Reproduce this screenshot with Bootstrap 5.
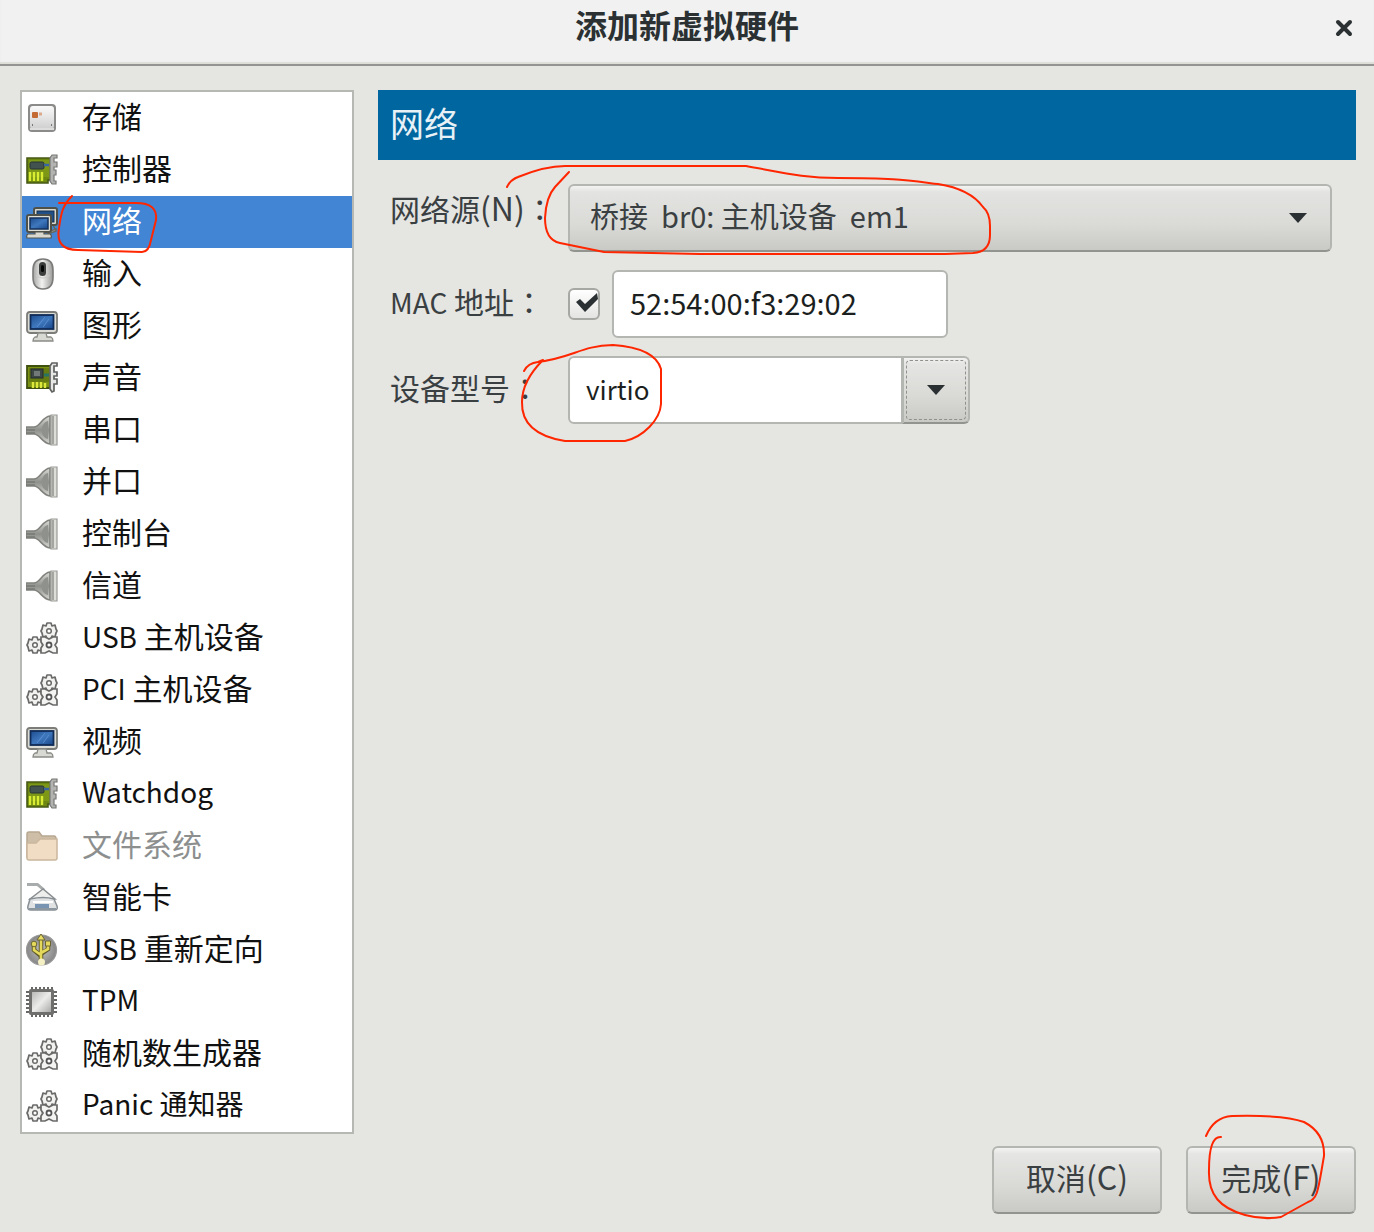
<!DOCTYPE html>
<html lang="zh-CN">
<head>
<meta charset="utf-8">
<meta name="viewport" content="width=device-width, initial-scale=1">
<title>添加新虚拟硬件</title>
<link href="https://cdn.jsdelivr.net/npm/bootstrap@5.3.0/dist/css/bootstrap.min.css" rel="stylesheet">
<style>
  body { font-family: "Noto Sans CJK SC", sans-serif; font-size: 30px; line-height: 44px; color: #3a4042; background: #e5e5e2; overflow-x: hidden; }
  .latin { font-size: 28px; }
  .accel { font-size: 32px; line-height: 40px; }
  .titlebar { height: 66px; background: #f1f1f1; border-bottom: 2px solid #949492; box-shadow: inset 0 -2px 1px #deded9; padding: 2px 20px 0; color: #2b3133; }
  .titlebar h1 { font-size: 32px; font-weight: 700; line-height: 44px; }
  .close-btn { width: 20px; height: 52px; }
  .close-btn svg { width: 18px; height: 18px; }
  .dialog-body { padding: 24px 18px 12px 20px; gap: 24px; }
  .hw-list { width: 334px; border: 2px solid #b6b8b3; background: #fff; }
  .hw-item, .hw-item:hover { height: 52px; padding: 0 0 6px 4px; gap: 24px; color: #111; text-decoration: none; line-height: 46px; white-space: nowrap; }
  .hw-item > svg.hw-icon { width: 32px; height: 34px; margin-top: 6px; flex: none; }
  .hw-item.current { background: #4285d4; color: #fff; }
  .hw-item.off { color: #8d8f8f; }
  .hw-item.off .hw-icon { opacity: .75; }
  .pane-head { height: 70px; background: #00669f; color: #e8f1f6; font-size: 34px; font-weight: 400; line-height: 66px; padding-left: 12px; }
  .fields { padding: 24px 24px 0 12px; gap: 18px; }
  .field-label { width: 178px; flex: none; white-space: nowrap; padding-bottom: 6px; }
  .field-label.raised { padding-bottom: 20px; }
  .colon { font-family: "Noto Sans CJK TC", sans-serif; }
  .gtk-box { height: 68px; border: 2px solid #b4b6b1; border-radius: 6px; font-size: 30px; color: #1c1f20; background: #fff; }
  .gtk-box:focus { box-shadow: none; border-color: #b4b6b1; }
  .gtk-face { color: #3a4042; border: 2px solid #b4b6b1; border-bottom-color: #92948f; border-radius: 6px; background: linear-gradient(#f3f3f2 0, #e5e5e3 6px, #d9d9d6 60%, #c9c9c6 100%); }
  .source-select { padding: 0 20px 4px; background: url("data:image/svg+xml,%3Csvg xmlns='http://www.w3.org/2000/svg' viewBox='0 0 20 12'%3E%3Cpath d='M1 1h18l-9 10z' fill='%232b3133'/%3E%3C/svg%3E") no-repeat right 22px center / 20px 12px, linear-gradient(#f3f3f2 0, #e3e3e1 6px, #dadad7 60%, #c9c9c6 100%); border-bottom-color: #92948f; color: #3a4042; font-size: 29px; }
  .mac-check { position: relative; width: 32px; height: 32px; }
  .mac-check .form-check-input { width: 32px; height: 32px; margin: 0; border: 2px solid #a6a8a4; border-radius: 6px; background: linear-gradient(#fff, #e4e4e2); }
  .mac-check svg { position: absolute; left: 6px; top: 4px; width: 26px; height: 22px; pointer-events: none; }
  .mac-input { width: 336px; padding: 0 16px 4px; font-size: 29px; }
  .model-group { width: 402px; }
  .model-group .form-control { padding: 0 16px 4px; font-size: 26px; }
  .model-btn { position: relative; width: 68px; padding: 0; }
  .model-btn::after { content: ""; position: absolute; inset: 2px; border: 1px dashed #8f918d; border-radius: 4px; }
  .model-btn svg { width: 20px; height: 12px; display: block; margin: auto; }
  .action-btn { width: 170px; height: 68px; padding: 0 0 6px; font-size: 30px; line-height: 44px; }
  .dialog-foot { padding: 0 18px 18px; gap: 24px; }
  .ink { position: absolute; left: 0; top: 0; width: 1px; height: 1px; overflow: visible; fill: none; stroke: #ff2600; stroke-width: 2; stroke-linecap: round; stroke-linejoin: round; pointer-events: none; z-index: 5; }
</style>
</head>
<body>
<svg class="position-absolute" width="0" height="0" aria-hidden="true">
  <defs>
    <linearGradient id="gLight" x1="0" y1="0" x2="0" y2="1"><stop offset="0" stop-color="#fafafa"/><stop offset="1" stop-color="#cfcfcf"/></linearGradient>
    <linearGradient id="gMouse" x1="0" y1="0" x2="1" y2="0"><stop offset="0" stop-color="#a5a5a3"/><stop offset=".45" stop-color="#f2f2f0"/><stop offset="1" stop-color="#9a9a98"/></linearGradient>
    <linearGradient id="gScreen" x1="0" y1="0" x2="1" y2="1"><stop offset="0" stop-color="#1d4c90"/><stop offset=".5" stop-color="#3f78bd"/><stop offset="1" stop-color="#17458a"/></linearGradient>
    <linearGradient id="gPlug" x1="0" y1="0" x2="0" y2="1"><stop offset="0" stop-color="#dcdcd8"/><stop offset=".5" stop-color="#8e908b"/><stop offset="1" stop-color="#d6d6d2"/></linearGradient>
    <linearGradient id="gChip" x1="0" y1="0" x2="1" y2="1"><stop offset="0" stop-color="#b9b9b7"/><stop offset=".5" stop-color="#ececea"/><stop offset="1" stop-color="#a9a9a7"/></linearGradient>
    <radialGradient id="gBall"><stop offset="0" stop-color="#c4c4c4"/><stop offset="1" stop-color="#858585"/></radialGradient>
    <g id="gear"><path d="M-2-8h4l1 3 3-1 1 4 1 2-1 2-1 4-3-1-1 3h-4l-1-3-3 1-1-4-1-2 1-2 1-4 3 1z" fill="#f2f2f1" stroke="#6a6b69" stroke-width="1.7" stroke-linejoin="round"/><circle r="2.3" fill="#fff" stroke="#6a6b69" stroke-width="1.5"/></g>
  </defs>
  <symbol id="i-disk" viewBox="0 0 32 34"><rect x="2" y="3" width="28" height="28" rx="4" fill="#8b8c8a"/><rect x="4" y="5" width="24" height="23" rx="3" fill="url(#gLight)"/><path d="M4 28h24" stroke="#ddd" stroke-width="2"/><rect x="6" y="11" width="6" height="6" rx="1" fill="#c46a35"/><path d="M13 13h3" stroke="#dba98c" stroke-width="3"/><path d="M6 24h1M25 24h1" stroke="#777" stroke-width="2"/></symbol>
  <symbol id="i-card" viewBox="0 0 32 34"><path d="M1 5h24v22h-3v3H1z" fill="#6d8710" stroke="#475a16" stroke-width="1.6"/><path d="M3 7h20v17H3z" fill="#7d9717"/><rect x="4" y="9" width="14" height="7" rx="1.5" fill="#42524f" stroke="#273536"/><path d="M18 12h5" stroke="#3a65a5" stroke-width="2.5"/><path d="M4 19v9M8 19v9M12 19v9M16 19v9" stroke="#d7ec33" stroke-width="2.4"/><path d="M31 2h-5l-2 3v23l2 3h4v-3h-2V22h2v-5h-2v-3h3V9h-3V5h3z" fill="#b3b4b1" stroke="#777975" stroke-width="1.2"/></symbol>
  <symbol id="i-sound" viewBox="0 0 32 34"><path d="M1 5h24v22H1z" fill="#7b9112" stroke="#40510f" stroke-width="1.8"/><path d="M3 7h20v14H3z" fill="#667b12"/><rect x="5" y="8" width="12" height="9" fill="#3c4746" stroke="#222d2c"/><rect x="8" y="10" width="6" height="5" fill="#717a79"/><path d="M18 14h5" stroke="#297365" stroke-width="3"/><path d="M7 21v6M11 21v6M15 21v6M19 22v5" stroke="#dce83b" stroke-width="2.4"/><path d="M31 2h-5l-2 3v23l2 3 2-1v-7h3v-5h-3v-3h3v-4h-3V5h3z" fill="#e7e7e5" stroke="#616361" stroke-width="1.7"/></symbol>
  <symbol id="i-net" viewBox="0 0 32 34"><path d="M27 20l2 4M22 27l8-3v2l-8 3z" fill="#ddd" stroke="#66675e" stroke-width="1.5"/><rect x="8" y="3" width="23" height="17" rx="2" fill="#d9d9d0" stroke="#4f5148" stroke-width="2"/><rect x="11" y="6" width="17" height="11" fill="#214f88" stroke="#17304e"/><rect x="1" y="10" width="24" height="17" rx="2" fill="#deded5" stroke="#4f5148" stroke-width="2"/><rect x="4" y="13" width="18" height="11" fill="url(#gScreen)" stroke="#14315a" stroke-width="1.5"/><path d="M9 27h9v2h6q2 1 1 4H1q-1-3 1-4h7z" fill="#d9d9d0" stroke="#55564e" stroke-width="1.2"/></symbol>
  <symbol id="i-mouse" viewBox="0 0 32 34"><path d="M17 2c7 0 10 4 10 11v7c0 8-4 12-10 12S7 28 7 20v-7C7 6 10 2 17 2z" fill="url(#gMouse)" stroke="#7a7b79" stroke-width="1.6"/><path d="M10 18c4 4 10 4 14 0" stroke="#c9c9c7" fill="none"/><rect x="13" y="5" width="7" height="14" rx="3.5" fill="#3c3d3d"/><rect x="15" y="8" width="3" height="7" rx="1.5" fill="#050606"/></symbol>
  <symbol id="i-mon" viewBox="0 0 32 34"><rect x="1" y="3" width="30" height="21" rx="3" fill="#dcdcd6" stroke="#7c7d78" stroke-width="1.8"/><rect x="4.500" y="6" width="23" height="14" fill="url(#gScreen)" stroke="#102b56" stroke-width="1.8"/><path d="M11 18L19 8M17 18l6-8" stroke="#5b8ed0" stroke-width="1"/><path d="M12 24h8l1 4h4q2 1 2 4H7q0-3 2-4h2z" fill="#d9d9d4" stroke="#8a8b86" stroke-width="1.3"/></symbol>
  <symbol id="i-plug" viewBox="0 0 32 34"><path d="M0 14h8c6 0 8-10 16-11v28c-8-1-10-10-16-10H0z" fill="url(#gPlug)" stroke="#80827d" stroke-width="1.6"/><path d="M0 17h9M0 20h9" stroke="#777974" stroke-width="1.3"/><path d="M22 8c-8 2-9 16 0 18z" fill="#8f918c"/><path d="M25 2h6v30h-6z" fill="#deded9" stroke="#999b96" stroke-width="1.2"/><path d="M27 3v28" stroke="#90928d" stroke-width="1.5"/></symbol>
  <symbol id="i-gears" viewBox="0 0 32 34"><use href="#gear" transform="translate(23 10)"/><use href="#gear" transform="translate(9 24)"/><path d="M15 16h4l4 2 4-2h4v5l-2 3 2 3v5h-4l-4-2-4 2h-4v-5l2-3-2-3z" fill="#f4f4f3" stroke="#6a6b69" stroke-width="1.7"/><circle cx="23" cy="24" r="2.500" fill="#fff" stroke="#555" stroke-width="1.8"/></symbol>
  <symbol id="i-folder" viewBox="0 0 32 34"><path d="M1 28V5q0-2 2-2h10l3 4h12q2 0 2 3v18z" fill="#bfa98a" stroke="#9f8a6d" stroke-width="1.5"/><path d="M1 14h9l4-4h17v19q0 2-2 2H3q-2 0-2-2z" fill="#ecd2af" stroke="#b99f7d" stroke-width="1.5"/></symbol>
  <symbol id="i-smart" viewBox="0 0 32 34"><path d="M1 2h11l7 6-2 2L11 5H1z" fill="#a9acac"/><path d="M17 8L4 18h25z" fill="#eeeeec" stroke="#898e91" stroke-width="1.5"/><path d="M4 18l-2 7q-1 4 3 4h24q3 0 2-4l-3-7q-10-3-24 0z" fill="#dfe1e2" stroke="#878e94" stroke-width="1.5"/><path d="M7 21h20" stroke="#fff" stroke-width="2"/><path d="M9 23h14v4H9z" fill="#7894b2"/><path d="M3 28h27" stroke="#8b969f" stroke-width="2"/></symbol>
  <symbol id="i-usb" viewBox="0 0 32 34"><circle cx="15.500" cy="17" r="15" fill="url(#gBall)" stroke="#999" stroke-width="1.2"/><g stroke="#5f5a29" stroke-width="4.500" fill="none"><path d="M15 5v23M8 11v6l7 6M22 10v6l-7 5"/></g><g stroke="#e5d95c" stroke-width="2.600" fill="none"><path d="M15 5v24M8 12v5l7 5M22 11v5l-7 4"/></g><path d="M15 1l4 6h-8z" fill="#eadf66" stroke="#6b6532"/><circle cx="8" cy="11" r="2.800" fill="#e5d95c" stroke="#6b6532"/><path d="M19.500 8h5v5h-5z" fill="#e5d95c" stroke="#6b6532"/><circle cx="15.500" cy="29" r="3.500" fill="#f5efc4"/></symbol>
  <symbol id="i-chip" viewBox="0 0 32 34"><path d="M6 2v30M10 2v30M14 2v30M18 2v30M22 2v30M26 2v30M0 7h31M0 11h31M0 15h31M0 19h31M0 23h31M0 27h31" stroke="#696a68" stroke-width="2"/><rect x="3" y="4" width="25" height="26" rx="2" fill="#6f706e"/><rect x="6" y="7" width="19" height="20" fill="url(#gChip)"/></symbol>
  <symbol id="i-x" viewBox="0 0 18 18"><path d="M3 3l12 12M15 3L3 15" stroke="#2b3133" stroke-width="4" stroke-linecap="round"/></symbol>
</svg>

<header class="titlebar d-flex justify-content-between align-items-start">
  <span class="close-btn" aria-hidden="true"></span>
  <h1 class="m-0 text-center">添加新虚拟硬件</h1>
  <button type="button" class="close-btn btn p-0 border-0 d-flex align-items-center justify-content-center" aria-label="关闭"><svg aria-hidden="true"><use href="#i-x"/></svg></button>
</header>

<main class="dialog-body d-flex align-items-stretch">
  <nav class="hw-list flex-shrink-0 d-flex flex-column" aria-label="硬件类型">
    <a href="#" class="hw-item d-flex align-items-center"><svg class="hw-icon"><use href="#i-disk"/></svg><span>存储</span></a>
    <a href="#" class="hw-item d-flex align-items-center"><svg class="hw-icon"><use href="#i-card"/></svg><span>控制器</span></a>
    <a href="#" class="hw-item current position-relative d-flex align-items-center" aria-current="true"><svg class="hw-icon"><use href="#i-net"/></svg><span>网络</span>
      <svg class="ink" aria-hidden="true"><g transform="translate(-22 -196)"><path d="M59 203H136Q158 203 156 220L151 240Q149 252 142 252L78 250Q55 250 59 228C61 214 62 206 72 196"/></g></svg></a>
    <a href="#" class="hw-item d-flex align-items-center"><svg class="hw-icon"><use href="#i-mouse"/></svg><span>输入</span></a>
    <a href="#" class="hw-item d-flex align-items-center"><svg class="hw-icon"><use href="#i-mon"/></svg><span>图形</span></a>
    <a href="#" class="hw-item d-flex align-items-center"><svg class="hw-icon"><use href="#i-sound"/></svg><span>声音</span></a>
    <a href="#" class="hw-item d-flex align-items-center"><svg class="hw-icon"><use href="#i-plug"/></svg><span>串口</span></a>
    <a href="#" class="hw-item d-flex align-items-center"><svg class="hw-icon"><use href="#i-plug"/></svg><span>并口</span></a>
    <a href="#" class="hw-item d-flex align-items-center"><svg class="hw-icon"><use href="#i-plug"/></svg><span>控制台</span></a>
    <a href="#" class="hw-item d-flex align-items-center"><svg class="hw-icon"><use href="#i-plug"/></svg><span>信道</span></a>
    <a href="#" class="hw-item d-flex align-items-center"><svg class="hw-icon"><use href="#i-gears"/></svg><span><span class="latin">USB</span> 主机设备</span></a>
    <a href="#" class="hw-item d-flex align-items-center"><svg class="hw-icon"><use href="#i-gears"/></svg><span><span class="latin">PCI</span> 主机设备</span></a>
    <a href="#" class="hw-item d-flex align-items-center"><svg class="hw-icon"><use href="#i-mon"/></svg><span>视频</span></a>
    <a href="#" class="hw-item d-flex align-items-center"><svg class="hw-icon"><use href="#i-card"/></svg><span class="latin">Watchdog</span></a>
    <a href="#" class="hw-item off d-flex align-items-center" aria-disabled="true"><svg class="hw-icon"><use href="#i-folder"/></svg><span>文件系统</span></a>
    <a href="#" class="hw-item d-flex align-items-center"><svg class="hw-icon"><use href="#i-smart"/></svg><span>智能卡</span></a>
    <a href="#" class="hw-item d-flex align-items-center"><svg class="hw-icon"><use href="#i-usb"/></svg><span><span class="latin">USB</span> 重新定向</span></a>
    <a href="#" class="hw-item d-flex align-items-center"><svg class="hw-icon"><use href="#i-chip"/></svg><span class="latin">TPM</span></a>
    <a href="#" class="hw-item d-flex align-items-center"><svg class="hw-icon"><use href="#i-gears"/></svg><span>随机数生成器</span></a>
    <a href="#" class="hw-item d-flex align-items-center"><svg class="hw-icon"><use href="#i-gears"/></svg><span class="latin">Panic <span>通知器</span></span></a>
  </nav>

  <section class="flex-grow-1">
    <h2 class="pane-head m-0">网络</h2>
    <form class="fields d-flex flex-column">
      <div class="position-relative d-flex align-items-center">
        <label class="field-label raised" for="source">网络源<span class="accel">(N)</span><span class="colon" lang="zh-TW">：</span></label>
        <select id="source" class="form-select gtk-box source-select"><option>桥接&nbsp; br0: 主机设备&nbsp; em1</option></select>
        <svg class="ink" aria-hidden="true"><g transform="translate(-390 -184)"><path d="M507 187Q510 180 518 177Q545 166 565 166H746C785 173 805 178 838 178C895 178 905 180 938 184Q970 189 983 207Q990 213 990 226V235Q990 252 973 253L945 254H700L604 252L560 243Q545 240 545 218Q546 197 555 187L569 172"/></g></svg>
      </div>
      <div class="d-flex align-items-center">
        <label class="field-label" for="mac"><span class="latin">MAC</span> 地址<span class="colon" lang="zh-TW">：</span></label>
        <div class="d-flex align-items-center gap-2">
          <div class="mac-check me-1 d-flex"><input id="macOn" type="checkbox" class="form-check-input" checked aria-label="MAC 地址"><svg viewBox="0 0 26 22" aria-hidden="true"><path d="M2 10l4-3 5 5L23 1l1 6-13 13z" fill="#2b3133"/></svg></div>
          <input id="mac" type="text" class="form-control gtk-box mac-input" value="52:54:00:f3:29:02">
        </div>
      </div>
      <div class="position-relative d-flex align-items-center">
        <label class="field-label" for="model">设备型号<span class="colon" lang="zh-TW">：</span></label>
        <div class="input-group model-group flex-nowrap">
          <input id="model" type="text" class="form-control gtk-box" value="virtio">
          <button type="button" class="btn gtk-face model-btn" aria-label="展开设备型号"><svg viewBox="0 0 20 12" aria-hidden="true"><path d="M1 1h18l-9 10z" fill="#2b3133"/></svg></button>
        </div>
        <svg class="ink" aria-hidden="true"><g transform="translate(-390 -356)"><path d="M524 371Q528 363 538 362C575 357 580 346 613 345Q655 348 661 369V404C660 420 643 437 625 441H565Q521 434 522 402C522 385 533 370 543 360L538 362"/></g></svg>
      </div>
    </form>
  </section>
</main>

<footer class="dialog-foot d-flex justify-content-end">
  <button type="button" class="btn gtk-face action-btn">取消<span class="accel">(C)</span></button>
  <button type="button" class="btn gtk-face action-btn position-relative">完成<span class="accel">(F)</span>
    <svg class="ink" aria-hidden="true"><g transform="translate(-1188 -1148)"><path d="M1206 1136Q1214 1117 1232 1116C1270 1115 1290 1117 1304 1122Q1325 1133 1324 1156C1318 1190 1318 1199 1308 1202L1281 1217Q1263 1220 1245 1215C1220 1208 1208 1195 1209 1170Q1209 1136 1221 1137"/></g></svg></button>
</footer>
<script src="https://cdn.jsdelivr.net/npm/bootstrap@5.3.0/dist/js/bootstrap.bundle.min.js"></script>
</body>
</html>
